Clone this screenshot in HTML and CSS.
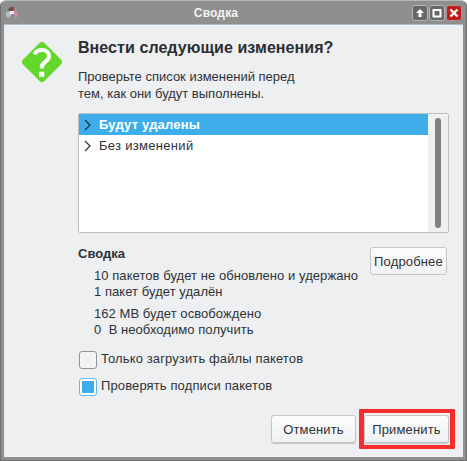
FILE: index.html
```html
<!DOCTYPE html>
<html lang="ru">
<head>
<meta charset="utf-8">
<title>Сводка</title>
<link rel="stylesheet" href="styles.css">
</head>
<body>
<div class="window">
  <header class="titlebar">
    <svg class="app-icon" viewBox="0 0 14 14" width="14" height="14">
      <path d="M2 3l4-2.500L8 2 7 5H3z" fill="#55565c"/>
      <path d="M0 6l4-1 1 5-3 2-2-2z" fill="#b9bcc4"/>
      <path d="M8 4l4 2v4l-3 3-1-1z" fill="#d08aa0"/>
      <path d="M4 5h4v4H4z" fill="#f0f0f2"/>
      <path d="M5 8h3v4H5z" fill="#6f8fb3"/>
      <path d="M6 1h2v4H6z" fill="#b9343a"/>
    </svg>
    <div class="title">Сводка</div>
    <div class="controls">
      <span class="ctl">
        <svg viewBox="0 0 10 10" width="10" height="10"><path d="M5 1L1 5h2.500v4h3V5H9z" fill="#fff"/></svg>
      </span>
      <span class="ctl">
        <svg viewBox="0 0 10 10" width="10" height="10"><path d="M1.500 2h7v6.500h-7z" fill="none" stroke="#fff" stroke-width="2"/></svg>
      </span>
      <span class="ctl ctl-close">
        <svg viewBox="0 0 10 10" width="10" height="10"><path d="M1.500 1.500l7 7M8.500 1.500l-7 7" fill="none" stroke="#fff" stroke-width="2.400"/></svg>
      </span>
    </div>
  </header>
  <main class="content">
    <div class="top">
      <svg class="question" viewBox="0 0 40 40" width="40" height="40">
        <rect x="4.850" y="4.850" width="30.300" height="30.300" rx="3.500" transform="rotate(45 20 20)" fill="#63d72b"/>
        <path d="M12.800 12.500C13.800 9.200 16.500 8 19.800 8c4.500 0 7.200 2.500 7.200 6 0 3-1.500 4.500-4 6-2.500 1.500-3.300 3-3.300 6.500" fill="none" stroke="#fff" stroke-width="4"/>
        <rect x="17" y="29.700" width="5.300" height="5" fill="#fff"/>
      </svg>
      <div class="intro">
        <h1 class="heading">Внести следующие изменения?</h1>
        <p class="desc">Проверьте список изменений перед<br>тем, как они будут выполнены.</p>
      </div>
    </div>
    <div class="listbox">
      <div class="rows">
        <div class="row row-selected">
          <svg class="chev" viewBox="0 0 8 12" width="8" height="12"><path d="M1 1l5 5-5 5" fill="none" stroke="#1f2a33" stroke-width="1.200"/></svg>
          <span>Будут удалены</span>
        </div>
        <div class="row">
          <svg class="chev" viewBox="0 0 8 12" width="8" height="12"><path d="M1 1l5 5-5 5" fill="none" stroke="#2a2e32" stroke-width="1.200"/></svg>
          <span>Без изменений</span>
        </div>
      </div>
      <div class="scrollbar"><div class="thumb"></div></div>
    </div>
    <section class="summary">
      <div class="summary-text">
        <div class="summary-title">Сводка</div>
        <div class="group">10 пакетов будет не обновлено и удержано<br>1 пакет будет удалён</div>
        <div class="group">162 MB будет освобождено<br>0&nbsp; В необходимо получить</div>
      </div>
      <button class="btn btn-details">Подробнее</button>
    </section>
    <div class="checks">
      <label class="check"><span class="box"></span>Только загрузить файлы пакетов</label>
      <label class="check"><span class="box box-on"><span class="box-fill"></span></span>Проверять подписи пакетов</label>
    </div>
    <footer class="actions">
      <button class="btn btn-cancel">Отменить</button>
      <button class="btn btn-apply">Применить</button>
    </footer>
  </main>
</div>
</body>
</html>
```
FILE: styles.css
```css
* { box-sizing: border-box; }
html, body { margin: 0; padding: 0; }
body {
  width: 467px;
  height: 461px;
  background: #ffffff;
  font-family: "Liberation Sans", Arial, sans-serif;
  font-size: 13px;
  color: #2e3338;
  overflow: hidden;
}
.window {
  width: 467px;
  height: 461px;
  display: flex;
  flex-direction: column;
  background: #8f8f8f;
  border: 1px solid #6f6f6f;
  border-top-color: #b8b8b8;
  border-radius: 6px 6px 0 0;
  padding: 0 3px 3px;
}
.titlebar {
  height: 23px;
  flex: none;
  display: flex;
  align-items: center;
  padding: 1px 1px 0 1px;
}
.app-icon { margin-left: 1px; flex: none; }
.title {
  flex: 1;
  text-align: center;
  color: #f2f2f2;
  font-weight: bold;
  font-size: 12px;
  letter-spacing: 0.15px;
  margin-top: -1px;
}
.controls {
  display: flex;
  gap: 1px;
}
.ctl {
  width: 16px;
  height: 16px;
  display: flex;
  align-items: center;
  justify-content: center;
  background: #676767;
  border: 1px solid #b5b5b5;
  border-radius: 3px;
}
.ctl-close { background: #c01c1c; border-color: #b09090; }
.content {
  flex: 1;
  min-height: 0;
  background: #eeeff1;
  border-top: 1px solid #a9bccb;
  padding: 12px 14px 0 18px;
  display: flex;
  flex-direction: column;
}
.top {
  display: flex;
  gap: 16px;
  height: 76px;
}
.question { margin-top: 5px; flex: none; }
.intro { flex: 1; }
.heading {
  margin: 0;
  font-size: 16px;
  line-height: 22px;
  font-weight: bold;
  color: #2a2e32;
  letter-spacing: 0.07px;
}
.desc {
  margin: 9px 0 0;
  line-height: 17px;
}
.listbox {
  margin-left: 56px;
  height: 120px;
  flex: none;
  border: 1px solid #bcbec0;
  border-radius: 2px;
  background: #fff;
  display: flex;
}
.rows { flex: 1; }
.row {
  height: 21px;
  display: flex;
  align-items: center;
  padding-left: 5px;
  gap: 7px;
  letter-spacing: 0.3px;
}
.row-selected {
  background: #3daee9;
  color: #fff;
  font-weight: bold;
  letter-spacing: 0.2px;
}
.scrollbar {
  width: 20px;
  background: #eff0f1;
  padding: 4px 7px;
}
.thumb {
  height: 100%;
  background: #7f8082;
  border-radius: 3px;
}
.summary {
  margin: 14px 0 0 56px;
  height: 100px;
  flex: none;
  display: flex;
  justify-content: space-between;
  align-items: flex-start;
  padding-right: 2px;
}
.summary-text { flex: 1; }
.summary-title {
  font-weight: bold;
  line-height: 14px;
}
.group {
  margin: 7px 0 0 16px;
  line-height: 16px;
  letter-spacing: 0.06px;
}
.group + .group { margin-top: 6px; }
.btn {
  font-family: "Liberation Sans", Arial, sans-serif;
  font-size: 13px;
  color: #2e3338;
  height: 28px;
  border: 1px solid #c4c5c7;
  border-radius: 3px;
  background: linear-gradient(#fcfcfc, #f0f1f2);
  padding: 0;
  letter-spacing: 0.15px;
}
.btn-details { width: 77px; flex: none; }
.checks {
  margin: 4px 0 0 57px;
  display: flex;
  flex-direction: column;
  gap: 9px;
}
.check {
  display: flex;
  align-items: flex-start;
  gap: 4px;
  height: 18px;
  line-height: 16px;
  letter-spacing: 0.12px;
}
.box {
  width: 18px;
  height: 18px;
  border: 1px solid #8f9193;
  border-radius: 3px;
  background: #f2f3f4;
  flex: none;
}
.box-on {
  border-color: #5fb7ea;
  background: #fff;
  padding: 2px;
}
.box-fill {
  display: block;
  width: 12px;
  height: 12px;
  background: #3daee9;
}
.actions {
  margin-top: 19px;
  display: flex;
  justify-content: flex-end;
  gap: 8px;
}
.btn-cancel, .btn-apply {
  width: 85px;
  box-shadow: 0 1px 1px rgba(0, 0, 0, 0.18);
}
.btn-apply { position: relative; }
.btn-apply::after {
  content: "";
  position: absolute;
  top: -7px;
  right: -7px;
  bottom: -7px;
  left: -6px;
  border: solid #f62d2d;
  border-width: 4px 5px;
  border-radius: 1px;
}
```
